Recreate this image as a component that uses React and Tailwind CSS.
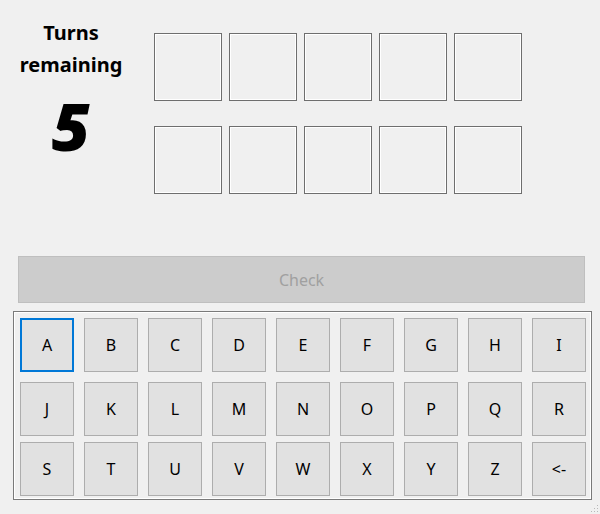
import React from 'react';

const rows = [
  ['A', 'B', 'C', 'D', 'E', 'F', 'G', 'H', 'I'],
  ['J', 'K', 'L', 'M', 'N', 'O', 'P', 'Q', 'R'],
  ['S', 'T', 'U', 'V', 'W', 'X', 'Y', 'Z', '<-'],
];

const Cell = () => (
  <div className="w-[68px] h-[68px] border border-[#6e6e6e] shadow-[inset_0_0_0_1px_#ffffff]" />
);

const Key = ({ label, focused }) => (
  <button
    className={`w-[54px] h-[54px] flex items-center justify-center bg-[#e1e1e1] text-[16px] text-black ${
      focused ? 'border-2 border-[#0078d7]' : 'border border-[#adadad]'
    }`}
  >
    {label}
  </button>
);

export default function App() {
  return (
    <div className="w-[600px] h-[514px] bg-[#f0f0f0] relative font-['Noto_Sans',sans-serif] overflow-hidden">
      {/* Turns + guess grid */}
      <div className="flex">
        <div className="w-[142px] flex flex-col items-center pt-[17px]">
          <div className="text-[20px] font-bold leading-[32px] text-black text-center">
            Turns
            <br />
            remaining
          </div>
          <div className="mt-[14px] text-[66px] leading-[60px] font-extrabold italic text-black font-['Open_Sans',sans-serif]">
            5
          </div>
        </div>
        <div className="ml-[12px] mt-[33px] flex flex-col gap-[25px]">
          {[0, 1].map((r) => (
            <div key={r} className="flex gap-[7px]">
              {[0, 1, 2, 3, 4].map((c) => (
                <Cell key={c} />
              ))}
            </div>
          ))}
        </div>
      </div>

      {/* Check button */}
      <div className="absolute left-[18px] top-[256px] w-[567px] h-[47px] bg-[#cccccc] border border-[#bfbfbf] flex items-center justify-center text-[16px] text-[#a0a0a0]">
        Check
      </div>

      {/* Keyboard */}
      <div className="absolute left-[13px] top-[311px] w-[579px] h-[189px] border border-[#7a7a7a] shadow-[inset_0_0_0_1px_#ffffff] pl-[6px] pt-[6px]">
        <div className="flex flex-col">
          {rows.map((row, ri) => (
            <div key={ri} className={`flex gap-[10px] ${ri === 1 ? 'mt-[10px]' : ri === 2 ? 'mt-[6px]' : ''}`}>
              {row.map((k) => (
                <Key key={k} label={k} focused={k === 'A'} />
              ))}
            </div>
          ))}
        </div>
      </div>

      {/* Resize grip */}
      <svg className="absolute right-[1px] bottom-[1px]" width="10" height="10" viewBox="0 0 10 10">
        <rect x="8" y="2" width="1" height="1" fill="#b8b8b8" />
        <rect x="5" y="5" width="1" height="1" fill="#b8b8b8" />
        <rect x="8" y="5" width="1" height="1" fill="#b8b8b8" />
        <rect x="2" y="8" width="1" height="1" fill="#b8b8b8" />
        <rect x="5" y="8" width="1" height="1" fill="#b8b8b8" />
        <rect x="8" y="8" width="1" height="1" fill="#b8b8b8" />
      </svg>
    </div>
  );
}
